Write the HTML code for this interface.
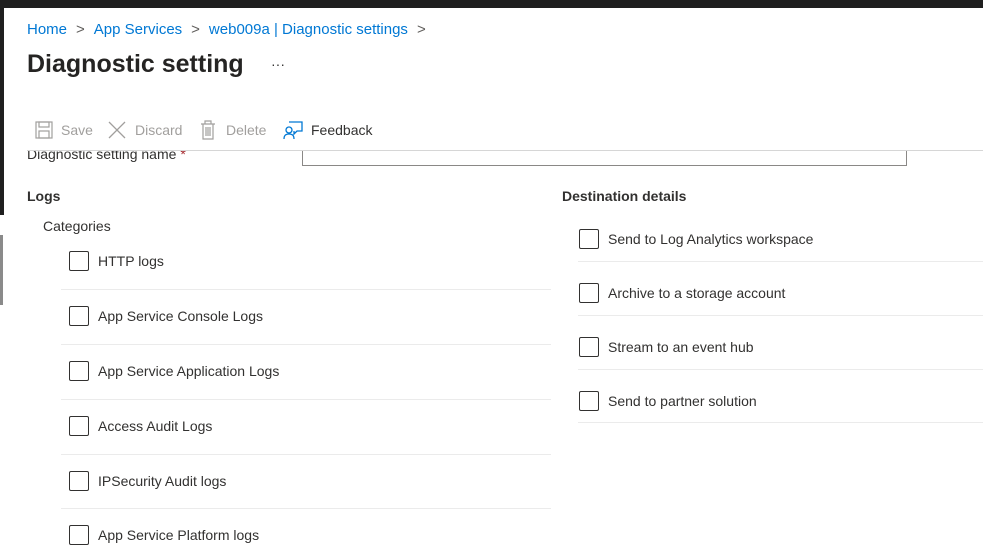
<!DOCTYPE html>
<html><head><meta charset="utf-8"><style>
*{margin:0;padding:0;box-sizing:border-box}
body{width:983px;height:550px;overflow:hidden;background:#fff;font-family:"Liberation Sans",sans-serif;color:#323130;position:relative;font-size:14px}
.a{position:absolute;white-space:nowrap}
.cb{position:absolute;width:20px;height:20px;border:1px solid #323130;border-radius:2px;background:#fff}
.sep{position:absolute;height:1px;background:#ebebeb}
.t{position:absolute;white-space:nowrap;font-size:14px;line-height:16px}
</style></head><body>
<div class="a" style="left:0;top:0;width:983px;height:8px;background:#1f1f1f"></div>
<div class="a" style="left:0;top:0;width:4px;height:215px;background:#1f1f1f"></div>
<div class="a" style="left:0;top:235px;width:3px;height:70px;background:#8a8a8a"></div>
<div class="a" style="left:27px;top:21px;font-size:15px;color:#0078d4">Home<span style="color:#605e5c;margin:0 9px">&gt;</span>App Services<span style="color:#605e5c;margin:0 9px">&gt;</span>web009a | Diagnostic settings<span style="color:#605e5c;margin:0 9px">&gt;</span></div>
<div class="a" style="left:27px;top:50px;font-size:25px;font-weight:bold;color:#252423">Diagnostic setting</div>
<div class="a" style="left:271px;top:56px;font-size:14px">···</div>
<svg class="a" style="left:35px;top:121px" width="18" height="18" viewBox="0 0 18 18" fill="none" stroke="#a19f9d" stroke-width="1.2"><rect x="1" y="1" width="16" height="16"/><rect x="4" y="1" width="10" height="5"/><rect x="4" y="10" width="10" height="7"/></svg>
<div class="t" style="left:61px;top:122px;color:#a19f9d">Save</div>
<svg class="a" style="left:108px;top:121px" width="18" height="18" viewBox="0 0 18 18" stroke="#a19f9d" stroke-width="1.3"><path d="M1 1L17 17M17 1L1 17"/></svg>
<div class="t" style="left:135px;top:122px;color:#a19f9d">Discard</div>
<svg class="a" style="left:200px;top:120px" width="16" height="20" viewBox="0 0 16 20" fill="none" stroke="#a19f9d" stroke-width="1.2"><path d="M1 4H15M5 4V1H11V4M3 4V19H13V4M6 7V16M8 7V16M10 7V16"/></svg>
<div class="t" style="left:226px;top:122px;color:#a19f9d">Delete</div>
<svg class="a" style="left:283px;top:120px" width="20" height="20" viewBox="0 0 20 20" fill="none" stroke="#0078d4" stroke-width="1.3"><path d="M6 2H19V11H14L11 14V11"/><circle cx="6" cy="10" r="3"/><path d="M1 19C1 15 3 14 6 14C9 14 11 15 11 19"/></svg>
<div class="t" style="left:311px;top:122px;color:#323130">Feedback</div>
<div class="a" style="left:27px;top:150px;width:956px;height:1px;background:#d6d6d6"></div>
<div class="a" style="left:27px;top:151px;width:270px;height:12px;overflow:hidden"><div style="margin-top:-5px;font-size:14px">Diagnostic setting name <span style="color:#a4262c">*</span></div></div>
<div class="a" style="left:302px;top:151px;width:605px;height:15px;border:1px solid #8a8886;border-top:none"></div>
<div class="t" style="left:27px;top:188px;font-weight:bold">Logs</div>
<div class="t" style="left:43px;top:218px">Categories</div>
<div class="cb" style="left:69px;top:251px"></div><div class="t" style="left:98px;top:253px">HTTP logs</div>
<div class="sep" style="left:61px;top:289px;width:490px"></div>
<div class="cb" style="left:69px;top:306px"></div><div class="t" style="left:98px;top:308px">App Service Console Logs</div>
<div class="sep" style="left:61px;top:344px;width:490px"></div>
<div class="cb" style="left:69px;top:361px"></div><div class="t" style="left:98px;top:363px">App Service Application Logs</div>
<div class="sep" style="left:61px;top:399px;width:490px"></div>
<div class="cb" style="left:69px;top:416px"></div><div class="t" style="left:98px;top:418px">Access Audit Logs</div>
<div class="sep" style="left:61px;top:454px;width:490px"></div>
<div class="cb" style="left:69px;top:471px"></div><div class="t" style="left:98px;top:473px">IPSecurity Audit logs</div>
<div class="sep" style="left:61px;top:508px;width:490px"></div>
<div class="cb" style="left:69px;top:525px"></div><div class="t" style="left:98px;top:527px">App Service Platform logs</div>
<div class="t" style="left:562px;top:188px;font-weight:bold">Destination details</div>
<div class="cb" style="left:579px;top:229px"></div><div class="t" style="left:608px;top:231px">Send to Log Analytics workspace</div>
<div class="sep" style="left:578px;top:261px;width:405px"></div>
<div class="cb" style="left:579px;top:283px"></div><div class="t" style="left:608px;top:285px">Archive to a storage account</div>
<div class="sep" style="left:578px;top:315px;width:405px"></div>
<div class="cb" style="left:579px;top:337px"></div><div class="t" style="left:608px;top:339px">Stream to an event hub</div>
<div class="sep" style="left:578px;top:369px;width:405px"></div>
<div class="cb" style="left:579px;top:391px"></div><div class="t" style="left:608px;top:393px">Send to partner solution</div>
<div class="sep" style="left:578px;top:422px;width:405px"></div>
</body></html>
